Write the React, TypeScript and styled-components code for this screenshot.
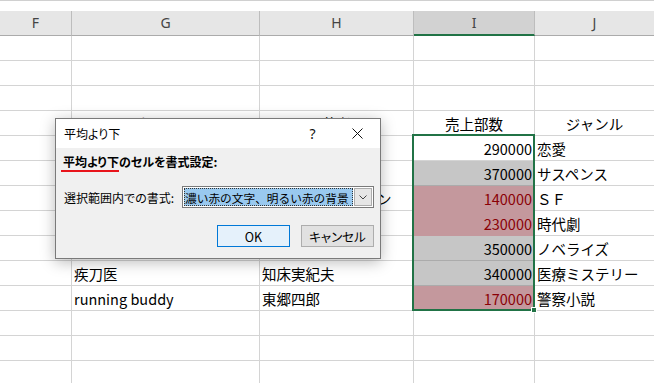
import styled, { createGlobalStyle } from 'styled-components'

const GlobalStyle = createGlobalStyle`
  html, body {
    margin: 0;
    padding: 0;
    background: #fff;
    overflow: hidden;
  }
  * {
    box-sizing: border-box;
  }
`

const CJK = `'Noto Sans CJK JP', 'Noto Sans', sans-serif`

const Page = styled.div`
  position: relative;
  width: 654px;
  height: 383px;
  overflow: hidden;
  font-family: ${CJK};
`

const Sheet = styled.div`
  display: grid;
  grid-template-columns: 72px 188px 154px 121px 120px;
  grid-template-rows: 11px 25px repeat(14, 25px);
`

const TopBand = styled.div`
  grid-column: 1 / -1;
  grid-row: 1;
  border-top: 1px solid #d0d0d0;
  background: #fff;
`

const ColHeader = styled.div<{ $selected?: boolean }>`
  grid-row: 2;
  display: flex;
  align-items: center;
  justify-content: center;
  padding-bottom: 1px;
  font-family: 'Noto Sans', sans-serif;
  font-size: 14px;
  color: #444;
  background: ${(p) => (p.$selected ? '#d2d2d2' : '#e6e6e6')};
  border-right: 1px solid #bdbdbd;
  border-bottom: ${(p) => (p.$selected ? '2px solid #217346' : '1px solid #ababab')};
`

type Fill = 'none' | 'gray' | 'pink'

const fillColor: Record<Fill, string> = {
  none: '#fff',
  gray: '#c6c6c6',
  pink: '#c4989d',
}

const Cell = styled.div<{ $row: number; $col: number; $align?: 'left' | 'right' | 'center'; $fill?: Fill; $bad?: boolean }>`
  grid-row: ${(p) => p.$row};
  grid-column: ${(p) => p.$col};
  display: flex;
  align-items: center;
  justify-content: ${(p) => (p.$align === 'right' ? 'flex-end' : p.$align === 'center' ? 'center' : 'flex-start')};
  padding: 0 2px 0 2px;
  font-size: 14.5px;
  white-space: nowrap;
  overflow: visible;
  color: ${(p) => (p.$bad ? '#8a0006' : '#000')};
  background: ${(p) => fillColor[p.$fill || 'none']};
  border-right: 1px solid #d4d4d4;
  border-bottom: 1px solid ${(p) => (p.$fill === 'gray' ? '#ababab' : p.$fill === 'pink' ? '#c4989d' : '#d4d4d4')};
`

const SelectionBox = styled.div`
  grid-column: 4;
  grid-row: 7 / 14;
  margin: -2px 0 0 -2px;
  border: 2px solid #217346;
  position: relative;
  pointer-events: none;
  z-index: 1;
`

const FillHandle = styled.div`
  position: absolute;
  right: -4px;
  bottom: -4px;
  width: 6px;
  height: 6px;
  background: #217346;
  border: 1px solid #fff;
`

const Dialog = styled.div`
  position: absolute;
  left: 55px;
  top: 118px;
  width: 326px;
  height: 141px;
  display: flex;
  flex-direction: column;
  background: #f0f0f0;
  border: 1px solid #7a7a7a;
  box-shadow: 0 3px 14px rgba(0, 0, 0, 0.28);
  font-family: ${CJK};
  font-size: 12px;
  font-feature-settings: 'palt';
  color: #000;
  z-index: 2;
`

const TitleBar = styled.div`
  height: 29px;
  display: flex;
  align-items: center;
  background: #fff;
  padding-left: 8px;
`

const Title = styled.div`
  flex: 1;
  font-size: 12px;
  padding-bottom: 1px;
`

const TitleButton = styled.div`
  width: 45px;
  height: 29px;
  display: flex;
  align-items: center;
  justify-content: center;
  font-family: 'Noto Sans', sans-serif;
  font-size: 14px;
  color: #111;
`

const Body = styled.div`
  flex: 1;
  display: flex;
  flex-direction: column;
  padding: 6px 6px 0 7px;
`

const Heading = styled.div`
  font-weight: bold;
  font-size: 12px;
  line-height: 16px;
`

const Marked = styled.span`
  position: relative;
  &::after {
    content: '';
    position: absolute;
    left: -2px;
    right: 0;
    bottom: -2px;
    height: 2px;
    background: #e8141b;
  }
`

const FormRow = styled.div`
  display: flex;
  align-items: center;
  margin-top: 16px;
  height: 22px;
`

const Label = styled.div`
  width: 119px;
  padding-left: 1px;
`

const Select = styled.div`
  flex: 1;
  min-width: 0;
  height: 22px;
  display: flex;
  align-items: stretch;
  background: #fff;
  border: 1px solid #7a7a7a;
  padding: 1px;
`

const SelectValue = styled.div`
  flex: 1;
  min-width: 0;
  display: flex;
  align-items: center;
  padding-left: 1px;
  background: #99c9ef;
  outline: 1px dotted #333;
  outline-offset: -1px;
  font-size: 11.7px;
  font-feature-settings: normal;
  white-space: nowrap;
  overflow: hidden;
`

const SelectArrow = styled.div`
  width: 18px;
  flex: none;
  margin-left: 1px;
  display: flex;
  align-items: center;
  justify-content: center;
  background: #e6e6e6;
  border: 1px solid #acacac;
`

const ButtonRow = styled.div`
  display: flex;
  justify-content: flex-end;
  gap: 11px;
  margin-top: 17px;
`

const Button = styled.div<{ $primary?: boolean }>`
  width: 73px;
  height: 22px;
  display: flex;
  align-items: center;
  justify-content: center;
  font-size: 12.5px;
  background: ${(p) => (p.$primary ? '#e5f1fb' : '#e1e1e1')};
  border: 1px solid ${(p) => (p.$primary ? '#0078d7' : '#adadad')};
`

type RowData = {
  g?: string
  h?: string
  i?: string
  j?: string
  fill?: Fill
  bad?: boolean
  header?: boolean
}

const rows: RowData[] = [
  {},
  {},
  {},
  { g: 'タイトル', h: '著者', i: '売上部数', j: 'ジャンル', header: true },
  { g: '春の約束', h: '青山真理子', i: '290000', j: '恋愛' },
  { g: '深夜の足音', h: '黒田正義', i: '370000', j: 'サスペンス', fill: 'gray' },
  { g: '星の彼方へ', h: 'ケン・アンダーソン', i: '140000', j: 'ＳＦ', fill: 'pink', bad: true },
  { g: '月影の剣', h: '佐々木一刀', i: '230000', j: '時代劇', fill: 'pink', bad: true },
  { g: '銀河の果て', h: '中村光', i: '350000', j: 'ノベライズ', fill: 'gray' },
  { g: '疾刀医', h: '知床実紀夫', i: '340000', j: '医療ミステリー', fill: 'gray' },
  { g: 'running buddy', h: '東郷四郎', i: '170000', j: '警察小説', fill: 'pink', bad: true },
  {},
  {},
  {},
]

const CloseIcon = () => (
  <svg width="11" height="11" viewBox="0 0 11 11">
    <path d="M0.5 0.5 L10.5 10.5 M10.5 0.5 L0.5 10.5" stroke="#111" strokeWidth="1" />
  </svg>
)

const Chevron = () => (
  <svg width="8" height="5" viewBox="0 0 8 5">
    <path d="M0.5 0.5 L4 4 L7.5 0.5" stroke="#444" strokeWidth="1" fill="none" />
  </svg>
)

function Row({ row, index }: { row: RowData; index: number }) {
  const r = index + 3
  const align = row.header ? 'center' : undefined
  return (
    <>
      <Cell $row={r} $col={1} />
      <Cell $row={r} $col={2} $align={align}>
        {row.g}
      </Cell>
      <Cell $row={r} $col={3} $align={align}>
        {row.h}
      </Cell>
      <Cell $row={r} $col={4} $align={row.header ? 'center' : 'right'} $fill={row.fill} $bad={row.bad}>
        {row.i}
      </Cell>
      <Cell $row={r} $col={5} $align={align}>
        {row.j}
      </Cell>
    </>
  )
}

export default function App() {
  return (
    <Page>
      <GlobalStyle />
      <Sheet>
        <TopBand />
        {['F', 'G', 'H', 'I', 'J'].map((c) => (
          <ColHeader key={c} $selected={c === 'I'}>
            {c}
          </ColHeader>
        ))}
        {rows.map((r, idx) => (
          <Row key={idx} row={r} index={idx} />
        ))}
        <SelectionBox>
          <FillHandle />
        </SelectionBox>
      </Sheet>
      <Dialog>
        <TitleBar>
          <Title>平均より下</Title>
          <TitleButton>?</TitleButton>
          <TitleButton>
            <CloseIcon />
          </TitleButton>
        </TitleBar>
        <Body>
          <Heading>
            <Marked>平均より下</Marked>のセルを書式設定:
          </Heading>
          <FormRow>
            <Label>選択範囲内での書式:</Label>
            <Select>
              <SelectValue>濃い赤の文字、明るい赤の背景</SelectValue>
              <SelectArrow>
                <Chevron />
              </SelectArrow>
            </Select>
          </FormRow>
          <ButtonRow>
            <Button $primary>OK</Button>
            <Button>キャンセル</Button>
          </ButtonRow>
        </Body>
      </Dialog>
    </Page>
  )
}
